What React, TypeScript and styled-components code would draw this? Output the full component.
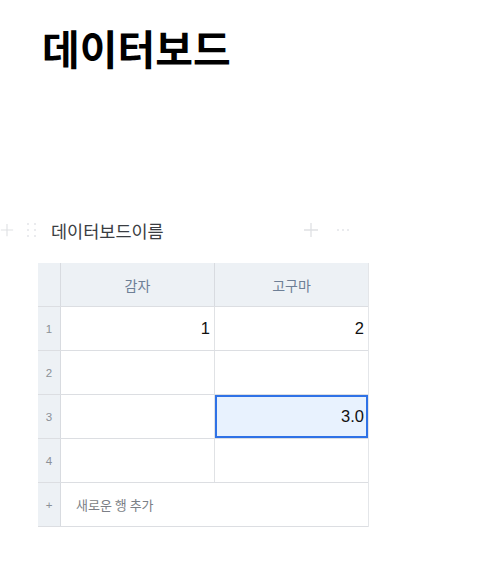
import styled, { createGlobalStyle } from 'styled-components';

const GlobalStyle = createGlobalStyle`
  body {
    margin: 0;
    background: #fff;
    font-family: 'Noto Sans CJK KR', 'Noto Sans', sans-serif;
  }
`;

const headers = ['감자', '고구마'];
const rows: (string | null)[][] = [
  ['1', '2'],
  [null, null],
  [null, '3.0'],
  [null, null],
];

const App = () => {
  return (
    <>
      <GlobalStyle />
      <Page>
        <Title>데이터보드</Title>
        <Block>
          <BlockHeader>
            <SideTools>
              <PlusIcon size={14} />
              <DragHandle>
                {Array.from({ length: 6 }).map((_, i) => (
                  <Dot key={i} />
                ))}
              </DragHandle>
            </SideTools>
            <BlockName>데이터보드이름</BlockName>
            <HeaderTools>
              <PlusIcon size={16} />
              <More>
                <Dot />
                <Dot />
                <Dot />
              </More>
            </HeaderTools>
          </BlockHeader>
          <Table>
            <Row>
              <NumCell />
              {headers.map((h) => (
                <HeadCell key={h}>{h}</HeadCell>
              ))}
            </Row>
            {rows.map((row, i) => (
              <Row key={i}>
                <NumCell>{i + 1}</NumCell>
                {row.map((v, j) => (
                  <Cell key={j} $selected={i === 2 && j === 1}>
                    {v}
                  </Cell>
                ))}
              </Row>
            ))}
            <Row>
              <NumCell>+</NumCell>
              <AddCell>새로운 행 추가</AddCell>
            </Row>
          </Table>
        </Block>
      </Page>
    </>
  );
};

const PlusIcon = ({ size }: { size: number }) => (
  <svg width={size} height={size} viewBox="0 0 16 16" fill="none" stroke="#dfe1e4" strokeWidth="1.3">
    <path d="M8 1v14M1 8h14" />
  </svg>
);

const Page = styled.div`
  display: flex;
  flex-direction: column;
`;

const Title = styled.h1`
  margin: 16px 0 0 42px;
  font-size: 41px;
  line-height: 62px;
  font-weight: 700;
  color: #000;
`;

const Block = styled.section`
  display: flex;
  flex-direction: column;
  margin-top: 139px;
`;

const BlockHeader = styled.div`
  display: flex;
  align-items: center;
  height: 26px;
  margin-bottom: 20px;
`;

const SideTools = styled.div`
  display: flex;
  align-items: center;
  gap: 13px;
  width: 51px;
`;

const DragHandle = styled.div`
  display: grid;
  grid-template-columns: 2px 2px;
  gap: 4px 5px;
`;

const Dot = styled.span`
  width: 2px;
  height: 2px;
  border-radius: 1px;
  background: #e3e5e8;
`;

const BlockName = styled.div`
  font-size: 17.5px;
  color: #3a3d42;
  width: 252px;
`;

const HeaderTools = styled.div`
  display: flex;
  align-items: center;
  gap: 20px;
`;

const More = styled.span`
  display: flex;
  gap: 3px;
  margin-left: -2px;
`;

const Table = styled.div`
  display: flex;
  flex-direction: column;
  margin-left: 38px;
  width: 330px;
  border-right: 1px solid #e4e6e9;
`;

const Row = styled.div`
  display: grid;
  grid-template-columns: 23px 154px 153px;
  height: 44px;
  border-bottom: 1px solid #dcdee2;
  box-sizing: border-box;
`;

const NumCell = styled.div`
  display: flex;
  align-items: center;
  justify-content: center;
  background: #edf1f5;
  border-right: 1px solid #d8dbe0;
  font-family: 'Liberation Sans', 'Noto Sans', sans-serif;
  font-size: 11.5px;
  color: #8b9097;
`;

const HeadCell = styled.div`
  display: flex;
  align-items: center;
  justify-content: center;
  background: #edf1f5;
  border-right: 1px solid #d8dbe0;
  font-size: 14px;
  color: #6e7f96;
  &:last-child {
    border-right: none;
  }
`;

const Cell = styled.div<{ $selected?: boolean }>`
  display: flex;
  align-items: center;
  justify-content: flex-end;
  padding-right: 4px;
  box-sizing: border-box;
  border-right: 1px solid #e0e2e5;
  font-family: 'Liberation Sans', 'Noto Sans', sans-serif;
  font-size: 16.5px;
  color: #111;
  background: ${(p) => (p.$selected ? '#e8f2fe' : '#fff')};
  outline: ${(p) => (p.$selected ? '2px solid #2f72e6' : 'none')};
  outline-offset: -2px;
  &:last-child {
    border-right: none;
  }
`;

const AddCell = styled.div`
  grid-column: span 2;
  display: flex;
  align-items: center;
  padding-left: 15px;
  font-size: 13px;
  color: #7b7f86;
`;

export default App;
